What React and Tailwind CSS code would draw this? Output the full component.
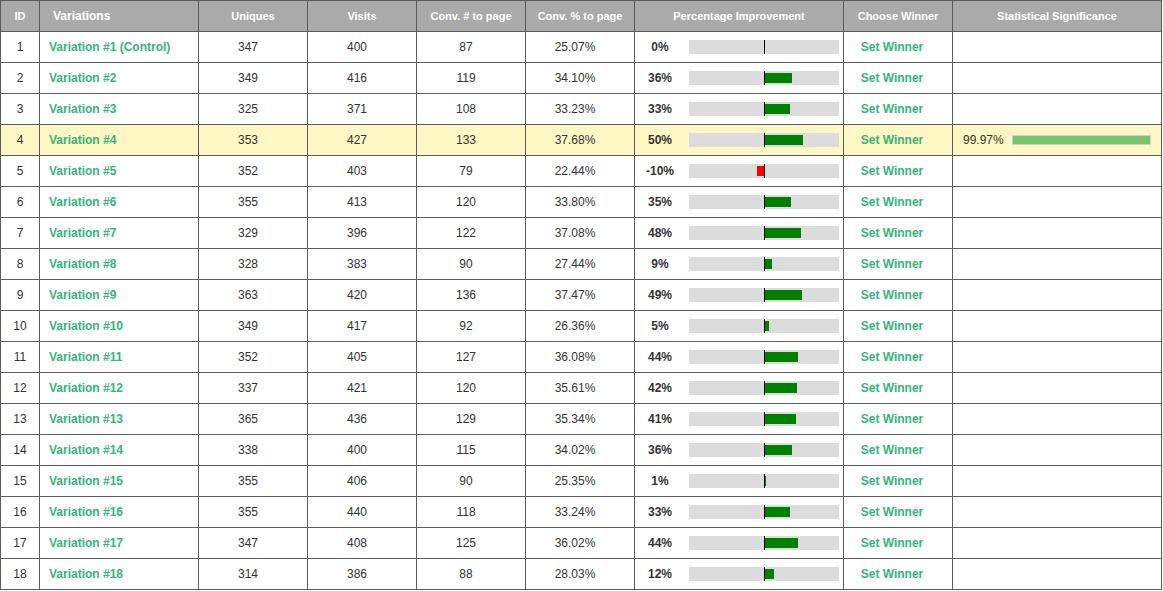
import React from 'react';

const rows = [
  [1, 'Variation #1 (Control)', 347, 400, 87, '25.07%', 0],
  [2, 'Variation #2', 349, 416, 119, '34.10%', 36],
  [3, 'Variation #3', 325, 371, 108, '33.23%', 33],
  [4, 'Variation #4', 353, 427, 133, '37.68%', 50, '99.97%'],
  [5, 'Variation #5', 352, 403, 79, '22.44%', -10],
  [6, 'Variation #6', 355, 413, 120, '33.80%', 35],
  [7, 'Variation #7', 329, 396, 122, '37.08%', 48],
  [8, 'Variation #8', 328, 383, 90, '27.44%', 9],
  [9, 'Variation #9', 363, 420, 136, '37.47%', 49],
  [10, 'Variation #10', 349, 417, 92, '26.36%', 5],
  [11, 'Variation #11', 352, 405, 127, '36.08%', 44],
  [12, 'Variation #12', 337, 421, 120, '35.61%', 42],
  [13, 'Variation #13', 365, 436, 129, '35.34%', 41],
  [14, 'Variation #14', 338, 400, 115, '34.02%', 36],
  [15, 'Variation #15', 355, 406, 90, '25.35%', 1],
  [16, 'Variation #16', 355, 440, 118, '33.24%', 33],
  [17, 'Variation #17', 347, 408, 125, '36.02%', 44],
  [18, 'Variation #18', 314, 386, 88, '28.03%', 12],
];

const widths = [39, 159, 109, 109, 109, 109, 209, 109, 209];

// bar scale: 75px == 100%
const ImprovementBar = ({ pct }) => {
  const w = Math.abs(pct) * 0.75;
  return (
    <div className="relative w-[150px] h-[14px] bg-[#dcdcdc]">
      {pct > 0 && (
        <div className="absolute top-[2px] h-[10px] bg-[#008000]" style={{ left: 76, width: w }} />
      )}
      {pct < 0 && (
        <div className="absolute top-[2px] h-[10px] bg-[#ff0000]" style={{ left: 75 - w, width: w }} />
      )}
      <div className="absolute top-0 left-[75px] w-px h-[14px] bg-black" />
    </div>
  );
};

const th = 'border border-[#5c5c5c] text-white font-bold text-[11px] text-center p-0';
const td = 'border border-[#5c5c5c] text-[12px] text-[#333] text-center p-0';
const num = `${td} pr-[10px]`;

export default function App() {
  return (
    <div className="bg-white w-[1163px] h-[591px]" style={{ fontFamily: '"Liberation Sans", Arial, sans-serif' }}>
      <table className="border-collapse table-fixed w-[1162px]">
        <colgroup>
          {widths.map((w, i) => (
            <col key={i} style={{ width: w }} />
          ))}
        </colgroup>
        <thead>
          <tr className="h-[31px] bg-[#aaaaaa]">
            <th className={th}>ID</th>
            <th className={`${th} !text-left !text-[12px] pl-[13px]`}>Variations</th>
            <th className={th}>Uniques</th>
            <th className={th}>Visits</th>
            <th className={th}>Conv. # to page</th>
            <th className={th}>Conv. % to page</th>
            <th className={th}>Percentage Improvement</th>
            <th className={th}>Choose Winner</th>
            <th className={th}>Statistical Significance</th>
          </tr>
        </thead>
        <tbody>
          {rows.map(([id, name, uniq, visits, conv, convPct, imp, sig]) => (
            <tr key={id} className={`h-[31px] ${sig ? 'bg-[#fff7c4]' : 'bg-white'}`}>
              <td className={td}>{id}</td>
              <td className={`${td} !text-left pl-[9px] font-bold !text-[#34b57a]`}>{name}</td>
              <td className={num}>{uniq}</td>
              <td className={num}>{visits}</td>
              <td className={num}>{conv}</td>
              <td className={num}>{convPct}</td>
              <td className={td}>
                <div className="flex items-center">
                  <span className="w-[50px] text-center font-bold">{imp}%</span>
                  <div className="ml-[4px]">
                    <ImprovementBar pct={imp} />
                  </div>
                </div>
              </td>
              <td className={`${td} pr-[12px] font-bold !text-[#34b57a]`}>Set Winner</td>
              <td className={`${td} !text-left`}>
                {sig && (
                  <div className="flex items-center pl-[10px] pr-[10px]">
                    <span className="text-[12px] text-[#333]">{sig}</span>
                    <div className="ml-[8px] flex-1 h-[10px] bg-[#77c66e] border border-[#cfcfcf]" />
                  </div>
                )}
              </td>
            </tr>
          ))}
        </tbody>
      </table>
    </div>
  );
}
